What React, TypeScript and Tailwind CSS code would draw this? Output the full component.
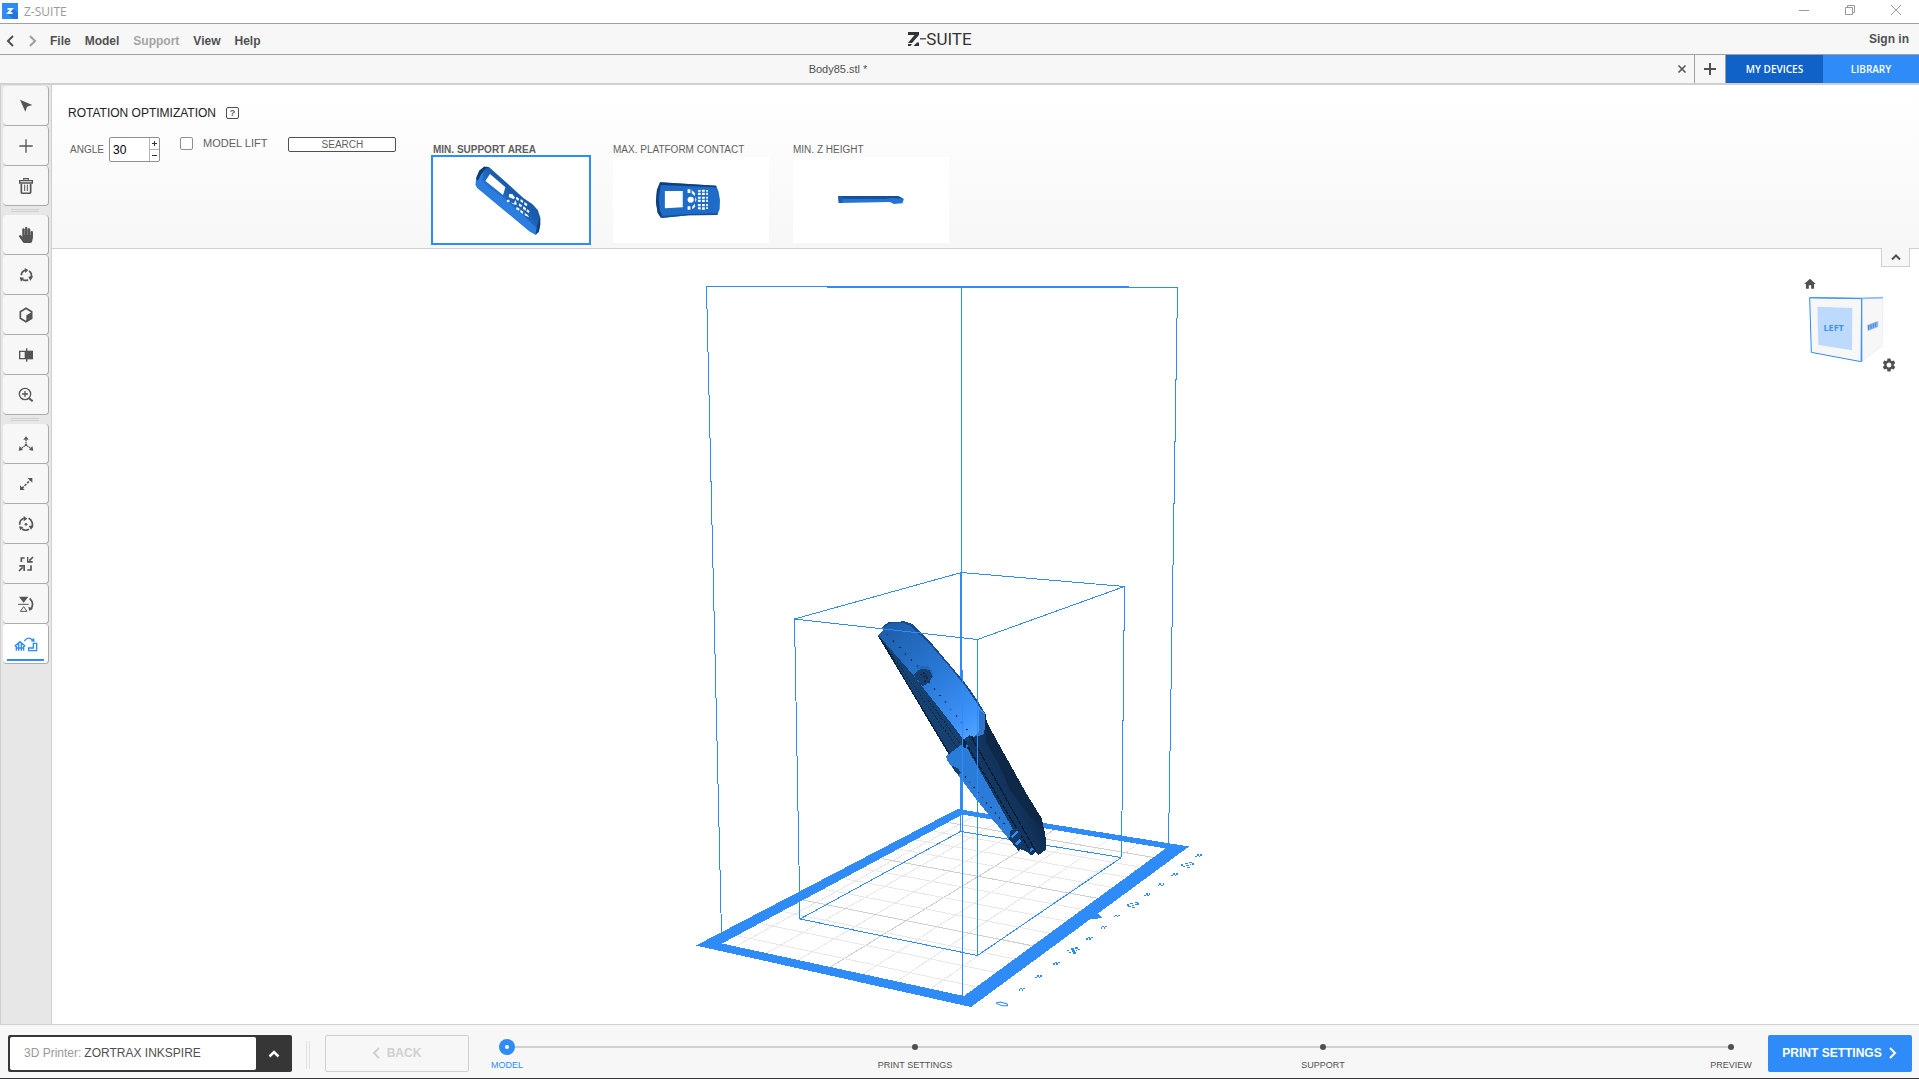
import React, { ReactNode, useState } from 'react';
import { FaHandPaper } from 'react-icons/fa';
import { MdHome, MdSettings } from 'react-icons/md';

type Point = [number, number];

// ---------- toolbar icons (drawn on a 48 unit grid) ----------

function Glyph({ children, wide }: { children: ReactNode; wide?: boolean }) {
  return (
    <svg
      viewBox={wide ? '0 0 72 48' : '0 0 48 48'}
      className={wide ? 'w-6 h-4' : 'w-4 h-4'}
      fill="none"
      stroke="currentColor"
      strokeWidth="4"
      aria-hidden="true"
    >
      {children}
    </svg>
  );
}

const icons: Record<string, ReactNode> = {
  select: (
    <Glyph>
      <path d="M6 5 L43 21 L27 26 L22 41 Z" fill="currentColor" stroke="none" />
    </Glyph>
  ),
  add: (
    <Glyph>
      <path d="M24 4 V44 M4 24 H44" />
    </Glyph>
  ),
  remove: (
    <Glyph>
      <path d="M17 5 V2 H31 V5 M5 8 H43 V15 H5 Z" />
      <path d="M10 17 V42 Q10 46 14 46 H34 Q38 46 38 42 V17" strokeWidth="5" />
      <path d="M20 20 V39 M28 20 V39" strokeWidth="3" />
    </Glyph>
  ),
  pan: <FaHandPaper className="w-4 h-4" />,
  orbit: (
    <Glyph>
      <path d="M10 25 A15 15 0 0 1 18 11 L24 10 M33 12 A16 16 0 0 1 39 31 M30 38 A16 16 0 0 1 13 37" strokeWidth="5" />
      <path d="M20 3 L31 9 L22 18 Z M46 28 L37 41 L31 29 Z M5 31 L18 32 L9 44 Z" fill="currentColor" stroke="none" />
    </Glyph>
  ),
  perspective: (
    <Glyph>
      <path d="M24 4 L41 14 V34 L24 44 L7 34 V14 Z" strokeWidth="5" />
      <path d="M42 15 L25 25 V45 L42 35 Z" fill="currentColor" stroke="none" />
    </Glyph>
  ),
  mirror: (
    <Glyph>
      <path d="M5 13 H22 V35 H5 Z M26 4 V44" />
      <path d="M26 11 H45 V37 H26 Z" fill="currentColor" stroke="none" />
    </Glyph>
  ),
  zoom: (
    <Glyph>
      <circle cx="21" cy="21" r="17" />
      <path d="M21 12 V30 M12 21 H30" />
      <path d="M33 34 L44 43" strokeWidth="6" />
    </Glyph>
  ),
  move: (
    <Glyph>
      <path d="M24 12 V23 M20 30 L10 37 M28 30 L38 37" strokeDasharray="4 2" />
      <circle cx="24" cy="27" r="4" fill="currentColor" stroke="none" />
      <path d="M24 1 L32 11 H16 Z M2 44 L5 30 L15 42 Z M46 44 L43 30 L33 42 Z" fill="currentColor" stroke="none" />
    </Glyph>
  ),
  scale: (
    <Glyph>
      <path d="M12 37 L37 12" strokeWidth="5" strokeDasharray="7 4" />
      <path d="M29 6 H43 V20 Z M6 28 V42 H20 Z" fill="currentColor" stroke="none" />
    </Glyph>
  ),
  rotate: (
    <Glyph>
      <path d="M5 26 A20 20 0 0 1 17 7 M32 7 A20 20 0 0 1 41 34 M33 40 A20 20 0 0 1 12 39" strokeWidth="5" />
      <path d="M17 0 L28 8 L17 16 Z M47 29 L39 41 L32 29 Z M3 31 L16 33 L7 43 Z" fill="currentColor" stroke="none" />
      <circle cx="24" cy="25" r="4" fill="currentColor" stroke="none" />
    </Glyph>
  ),
  fit: (
    <Glyph>
      <path d="M10 18 V6 H20 M28 42 H39 V28" strokeWidth="5" />
      <path d="M45 3 L34 14 M3 45 L14 34" strokeWidth="5" />
      <path d="M27 3 H31 V15 H44 V20 H27 Z M21 45 H16 V32 H4 V27 H21 Z" fill="currentColor" stroke="none" />
    </Glyph>
  ),
  flip: (
    <Glyph>
      <path d="M3 2 H31 L17 20 Z" fill="currentColor" stroke="none" />
      <path d="M0 25 H32" strokeWidth="3" />
      <path d="M17 32 L27 46 H7 Z" strokeWidth="3" />
      <path d="M35 7 Q50 22 39 38" strokeWidth="5" />
      <path d="M31 32 L45 38 L34 45 Z" fill="currentColor" stroke="none" />
    </Glyph>
  ),
  optimize: (
    <Glyph wide>
      <path d="M2 31 L18 17 L34 31 M7 30 V44 M14 22 V44 M22 22 V44 M29 30 V44 M5 36 H31" strokeWidth="4" />
      <path d="M31 15 Q42 -1 56 12" />
      <path d="M62 18 L50 16 L60 5 Z" fill="currentColor" stroke="none" />
      <path d="M58 22 H68 V44 H44 V36 H58 Z" />
    </Glyph>
  ),
};

const toolGroups = [
  [['select', 'Select'], ['add', 'Add model'], ['remove', 'Delete']],
  [['pan', 'Pan'], ['orbit', 'Orbit'], ['perspective', 'Perspective'], ['mirror', 'Section'], ['zoom', 'Zoom']],
  [['move', 'Move'], ['scale', 'Scale'], ['rotate', 'Rotate'], ['fit', 'Fit'], ['flip', 'Flip'], ['optimize', 'Rotation optimization']],
];

function Chevron({ dir, className }: { dir: 'left' | 'right'; className?: string }) {
  const d = { left: 'M8 1 L3 6 L8 11', right: 'M4 1 L9 6 L4 11' }[dir];
  return (
    <svg viewBox="0 0 12 12" className={'w-3 h-3 ' + (className || '')} fill="none" stroke="currentColor" strokeWidth="2" aria-hidden="true">
      <path d={d} />
    </svg>
  );
}

// ---------- chrome ----------

function TitleBar() {
  return (
    <div className="h-6 flex items-center bg-white border-b border-[#a0a0a0] text-[#999999]">
      <svg viewBox="0 0 16 16" className="w-4 h-4 ml-0.5 mb-0.5" aria-hidden="true">
        <rect width="16" height="16" fill="#2e8bf7" />
        <path d="M11 5 L16 10 V16 H11 L6 11 Z" fill="#2374dc" />
        <path d="M5.5 5.8 H10 L6 10.2 H10.5" fill="none" stroke="#fff" strokeWidth="1.7" />
      </svg>
      <span className="ml-1.5 text-[12px] leading-4 font-['Open_Sans',sans-serif]">Z-SUITE</span>
      <div className="ml-auto flex items-center gap-9 mr-[18px] pb-1">
        <button aria-label="Minimize">
          <svg viewBox="0 0 10 10" className="w-2.5 h-2.5" stroke="currentColor"><path d="M0 5.5 H10" /></svg>
        </button>
        <button aria-label="Restore">
          <svg viewBox="0 0 10 10" className="w-2.5 h-2.5" fill="none" stroke="currentColor">
            <path d="M.5 2.5 H7.5 V9.5 H.5 Z M2.5 2 V.5 H9.5 V7.5 H8" />
          </svg>
        </button>
        <button aria-label="Close">
          <svg viewBox="0 0 10 10" className="w-2.5 h-2.5" stroke="currentColor"><path d="M0 0 L10 10 M10 0 L0 10" /></svg>
        </button>
      </div>
    </div>
  );
}

function MenuBar() {
  return (
    <div className="h-[31px] flex items-center pl-[5px] pr-2.5 bg-[#f7f7f7] border-b border-[#a0a0a0] text-[12px] font-bold text-[#505050]">
      <nav className="flex-1 flex items-center pt-1">
        <button aria-label="Undo"><Chevron dir="left" /></button>
        <button aria-label="Redo" className="ml-[9px] mr-3 text-[#9f9f9f]"><Chevron dir="right" /></button>
        <div className="flex gap-3.5">
          <button>File</button>
          <button>Model</button>
          <button disabled className="text-[#a5a5a5]">Support</button>
          <button>View</button>
          <button>Help</button>
        </div>
      </nav>
      <div className="flex items-center pl-1.5 text-[#333333]">
        <svg viewBox="0 0 18 14" className="w-[18px] h-3.5" fill="#333333" aria-hidden="true">
          <path d="M0 0 H11 V3 L4 11 H0 L6.5 3 H0 Z M5.500 14 L9 10.500 H11 V14 Z M0 12 H4 L2.500 14 H0 Z" />
          <path d="M12 6.200 H18 V7.400 H12 Z" />
        </svg>
        <span className="text-[17px] leading-5 font-normal font-['Roboto',sans-serif]">SUITE</span>
      </div>
      <div className="flex-1" />
      <a href="#signin">Sign in</a>
    </div>
  );
}

function TabBar() {
  return (
    <div className="h-[30px] flex items-stretch bg-[#f7f7f7] border-b-2 border-[#d0d0d0] text-[#505050]">
      <div className="flex-1 flex items-center pr-1.5 border-r border-[#a0a0a0]">
        <span className="flex-1 text-center text-[11px]">Body85.stl *</span>
        <button aria-label="Close tab" className="w-3 h-3 flex items-center justify-center">
          <svg viewBox="0 0 8 8" className="w-2 h-2" stroke="currentColor" strokeWidth="1.5"><path d="M.5 .5 L7.500 7.500 M7.500 .5 L.5 7.500" /></svg>
        </button>
      </div>
      <button aria-label="New tab" className="w-[31px] flex items-center justify-center border-r border-[#a0a0a0]">
        <svg viewBox="0 0 12 12" className="w-3 h-3" stroke="currentColor" strokeWidth="2"><path d="M6 0 V12 M0 6 H12" /></svg>
      </button>
      <button className="w-[97px] bg-[#1062c8] text-white text-[10px] font-semibold font-['Open_Sans',sans-serif]">MY DEVICES</button>
      <button className="w-24 bg-[#2e8bf7] text-white text-[10px] font-semibold font-['Open_Sans',sans-serif]">LIBRARY</button>
    </div>
  );
}

function Sidebar() {
  return (
    <aside className="w-[52px] shrink-0 bg-[#e7e7e7] border-x border-[#d0d0d0] pt-px pl-0.5">
      {toolGroups.map((group, i) => (
        <div key={i}>
          {i > 0 && (
            <div className="h-[9px] flex justify-center items-center">
              <div className="w-7 h-[3px] mr-1 border-y border-[#d0d0d0]" />
            </div>
          )}
          {group.map(([id, label]) => (
            <button
              key={id}
              aria-label={label}
              className={
                id === 'optimize'
                  ? 'w-[46px] h-10 px-1 pt-1 flex flex-col items-center justify-between bg-white text-[#2e8bf7] rounded border-r border-b border-[#ababab]'
                  : 'w-[46px] h-10 flex items-center justify-center bg-[#f7f7f7] text-[#555555] rounded border-r border-b border-[#ababab]'
              }
            >
              {id === 'optimize' ? <span className="flex-1 flex items-center">{icons[id]}</span> : icons[id]}
              {id === 'optimize' && <span className="w-full h-0.5 mb-0.5 bg-[#2e8bf7]" />}
            </button>
          ))}
        </div>
      ))}
    </aside>
  );
}

// ---------- orientation thumbnails ----------

function SupportThumb() {
  return (
    <svg viewBox="433 157 156 86" className="w-full h-full" aria-hidden="true">
      <defs>
        <linearGradient id="thumbBody" x1="0" y1="1" x2="1" y2="0">
          <stop offset="0.3" stopColor="#2f86ee" />
          <stop offset="0.6" stopColor="#1a5cab" />
        </linearGradient>
      </defs>
      <g transform="translate(420 130) scale(0.3444 0.3333)">
        <path d="M161 165 L163 145 L172 122 L186 110 L200 111 L262 168 L300 204 L326 222 L342 240 L349 262 L349 285 L345 305 L336 314 L318 304 L166 174 Z" fill="url(#thumbBody)" />
        <path d="M163 165 L165 145 L175 122 L190 112 L184 130 L180 152 L200 173 L240 200 L345 300 L336 314 L318 304 Z" fill="#2b7de0" />
        <path d="M163 145 L172 122 L186 110 L200 111 L190 116 L176 135 L168 152 Z" fill="#103a6e" />
        <path d="M190 153 L203 132 L248 172 L241 195 Z" fill="#fff" />
        <path d="M349 262 L349 285 L345 305 L336 314 L340 285 Z" fill="#11417c" />
        <g fill="#fff">
          <path d="M259 192 L268 192 L276 203 L271 207 L258 201 Z" />
          <circle cx="256" cy="213" r="4" />
          <path d="M264 217 L272 221 L278 210 L281 224 L270 223 Z" />
          <path d="M281 200 L288 206 L285 213 L278 206 Z M293 207 L300 213 L298 219 L291 214 Z M304 216 L312 223 L309 229 L302 223 Z" />
          <path d="M288 220 L296 226 L294 232 L287 227 Z M300 229 L308 235 L306 242 L299 236 Z M311 238 L318 243 L316 249 L309 244 Z" />
          <path d="M281 231 L289 236 L288 242 L279 238 Z M292 239 L300 245 L298 252 L291 246 Z M304 249 L312 254 L317 262 L304 256 Z" />
        </g>
      </g>
    </svg>
  );
}

function PlatformThumb() {
  return (
    <svg viewBox="613 157 156 86" className="w-full h-full" aria-hidden="true">
      <g transform="translate(420 130) scale(0.3444 0.3333)">
        <path d="M697 157 L780 162 L860 167 L867 185 L871 210 L870 238 L863 255 L780 256 L700 264 L690 248 L685 215 L688 180 Z" fill="#1f6bc8" />
        <path d="M697 157 L688 180 L685 215 L690 248 L700 264 L703 258 L696 240 L693 205 L699 165 L860 172 L860 167 Z" fill="#123f7a" />
        <path d="M700 264 L780 256 L863 255 L865 250 L780 252 L702 258 Z" fill="#174f96" />
        <path d="M711 183 H763 V232 L711 235 Z" fill="#fff" />
        <g fill="#fff">
          <circle cx="786" cy="209" r="9" />
          <path d="M777 178 H785 V189 H777 Z M789 180 L799 190 L798 198 L789 190 Z M777 229 H785 V239 H777 Z M790 231 L798 221 L799 230 L791 238 Z M799 201 L803 209 L799 217 Z" />
          <path d="M807 181 L815 179 V195 H807 Z M807 200 H815 V216 H807 Z M807 222 H815 V239 L807 237 Z" />
          <path d="M819 179 H827 V195 H819 Z M819 200 H827 V216 H819 Z M819 222 H827 V239 H819 Z" />
          <path d="M831 180 H836 V195 H831 Z M831 200 H836 V216 H831 Z M831 222 H836 V237 H831 Z" />
        </g>
        <path d="M805 187 H838 M805 208 H838 M805 230 H838" stroke="#1f6bc8" strokeWidth="3" />
      </g>
    </svg>
  );
}

function HeightThumb() {
  return (
    <svg viewBox="793 157 156 86" className="w-full h-full" aria-hidden="true">
      <g transform="translate(420 130) scale(0.3444 0.3333)">
        <path d="M1214 198 L1388 198 L1405 207 L1401 220 L1376 222 L1365 216 L1216 219 Z" fill="#2374d6" />
        <path d="M1216 198 L1388 198 L1404 206 L1370 204 L1350 207 L1228 206 Z" fill="#185097" />
        <path d="M1214 198 L1226 199 L1226 219 L1216 219 Z" fill="#1b5eb0" />
      </g>
    </svg>
  );
}

const orientations = [
  { id: 'support', label: 'MIN. SUPPORT AREA', thumb: <SupportThumb /> },
  { id: 'platform', label: 'MAX. PLATFORM CONTACT', thumb: <PlatformThumb /> },
  { id: 'height', label: 'MIN. Z HEIGHT', thumb: <HeightThumb /> },
];

function RotationPanel() {
  const [angle, setAngle] = useState(30);
  const [lift, setLift] = useState(false);
  const [selected, setSelected] = useState('support');

  return (
    <section className="relative z-10 h-[164px] flex items-start bg-gradient-to-b from-white to-[#f7f7f7] border-b border-[#d0d0d0] text-[#5f5f5f]">
      <div className="w-[379px] shrink-0 pl-4 pt-5">
        <div className="flex items-center gap-2.5">
          <h1 className="text-[12px] leading-4 text-[#222222]">ROTATION OPTIMIZATION</h1>
          <button aria-label="Help" className="w-[13px] h-3 flex items-center justify-center rounded-xs border border-[#505050] text-[9px] leading-none font-bold">?</button>
        </div>
        <div className="mt-4 flex items-start">
          <label htmlFor="angle" className="w-10 pt-px pl-0.5 text-[10px] leading-6">ANGLE</label>
          <div className="flex w-[51px] h-[25px] ml-px border border-[#909090] rounded-xs bg-white">
            <input
              id="angle"
              type="text"
              value={angle}
              onChange={(e) => setAngle(Number(e.target.value) || 0)}
              className="w-10 min-w-0 pl-[3px] pt-px text-[12px] text-black outline-none"
            />
            <div className="w-[10px] shrink-0 flex flex-col border-l border-[#b5b5b5] text-[#333333]">
              <button aria-label="Increase" onClick={() => setAngle(angle + 1)} className="flex-1 flex items-center justify-center border-b border-[#b5b5b5]">
                <svg viewBox="0 0 5 5" className="w-[5px] h-[5px]" stroke="currentColor"><path d="M2.500 0 V5 M0 2.500 H5" /></svg>
              </button>
              <button aria-label="Decrease" onClick={() => setAngle(angle - 1)} className="flex-1 flex items-center justify-center">
                <svg viewBox="0 0 5 5" className="w-[5px] h-[5px]" stroke="currentColor"><path d="M0 2.500 H5" /></svg>
              </button>
            </div>
          </div>
          <label className="ml-5 flex items-center gap-2.5 text-[11px] leading-[13px]">
            <input
              type="checkbox"
              checked={lift}
              onChange={(e) => setLift(e.target.checked)}
              className="appearance-none w-[13px] h-[13px] bg-white border border-[#909090] rounded-xs checked:bg-[#2e8bf7]"
            />
            MODEL LIFT
          </label>
          <button className="ml-[21px] w-[108px] h-[15px] border border-[#505050] rounded-xs bg-white text-[10px] leading-none">SEARCH</button>
        </div>
      </div>
      <div className="flex gap-5 pt-[59px]">
        {orientations.map((o) => (
          <button key={o.id} onClick={() => setSelected(o.id)} className="w-40 text-left">
            <span className={selected === o.id ? 'block pl-0.5 text-[10px] leading-[11px] font-bold' : 'block pl-0.5 text-[10px] leading-[11px]'}>{o.label}</span>
            <span className={selected === o.id ? 'block h-[90px] border-2 border-[#2e8bf7] bg-white' : 'block h-[90px] border-2 border-transparent bg-white bg-clip-padding'}>
              {o.thumb}
            </span>
          </button>
        ))}
      </div>
      <button aria-label="Collapse panel" className="absolute right-[9px] top-[163px] w-[29px] h-[19px] flex items-center justify-center bg-[#f7f7f7] border border-t-0 border-[#d0d0d0] text-[#505050]">
        <svg viewBox="0 0 10 6" className="w-2.5 h-1.5" fill="none" stroke="currentColor" strokeWidth="2"><path d="M1 5.500 L5 1.500 L9 5.500" /></svg>
      </button>
    </section>
  );
}

// ---------- 3D scene ----------

// inner corners of the build platform on screen: left, front, right, back
const platform: Point[] = [[722, 943.5], [964, 996], [1165.5, 848.5], [962.5, 814.5]];

// maps the unit square onto the platform with perspective
function project(u: number, v: number): Point {
  const [[x0, y0], [x1, y1], [x2, y2], [x3, y3]] = platform;
  const dx1 = x1 - x2, dx2 = x3 - x2, dx3 = x0 - x1 + x2 - x3;
  const dy1 = y1 - y2, dy2 = y3 - y2, dy3 = y0 - y1 + y2 - y3;
  const det = dx1 * dy2 - dx2 * dy1;
  const g = (dx3 * dy2 - dx2 * dy3) / det;
  const h = (dx1 * dy3 - dx3 * dy1) / det;
  const w = g * u + h * v + 1;
  return [
    ((x1 - x0 + g * x1) * u + (x3 - x0 + h * x3) * v + x0) / w,
    ((y1 - y0 + g * y1) * u + (y3 - y0 + h * y3) * v + y0) / w,
  ];
}

function gridLine(a: Point, b: Point) {
  return `M${project(...a).join(' ')} L${project(...b).join(' ')}`;
}

const BED_X = 74;
const BED_Y = 132;
const across = [4.4, 14.4, 24.4, 34.4, 44.4, 54.4, 64.4];
const along = [6.5, 17, 27.5, 38, 48.5, 59, 69.5, 80, 90.5, 101, 111.5, 122];

// every fourth line is a major one
function Grid() {
  return (
    <g fill="none" strokeWidth="1">
      {across.map((x, i) => (
        <path key={'x' + x} d={gridLine([x / BED_X, 0], [x / BED_X, 1])} stroke={i % 4 === 3 ? '#cfcfcf' : '#e8e8e8'} />
      ))}
      {along.map((y, i) => (
        <path key={'y' + y} d={gridLine([0, y / BED_Y], [1, y / BED_Y])} stroke={i % 4 === 3 ? '#cfcfcf' : '#e8e8e8'} />
      ))}
    </g>
  );
}

function Ruler() {
  const small: Point[] = [[992, 628], [1040, 590], [1092, 550], [1188, 475], [1230, 442], [1268, 408], [1356, 344], [1396, 314], [1436, 284], [1505, 227]];
  const large: Point[] = [[1143, 512], [1316, 375], [1474, 255]];
  return (
    <g transform="translate(680 780) scale(0.3444 0.3333)" fill="none" stroke="#2e8bf7" strokeWidth="3">
      <path d="M919 668 L930 666 L950 672 L951 677 L936 677 L920 671 Z" />
      {small.map(([x, y]) => (
        <path key={x} strokeWidth="4" d={`M${x - 9} ${y + 2} h5 M${x - 4} ${y - 2} h6 M${x + 1} ${y + 2} h4 M${x + 5} ${y - 2} h5`} />
      ))}
      {large.map(([x, y]) => (
        <path key={x} strokeWidth="4" d={`M${x - 18} ${y} h5 M${x - 14} ${y + 5} h7 M${x - 8} ${y - 5} h8 M${x - 4} ${y + 1} h7 M${x - 3} ${y + 7} h9 M${x + 4} ${y - 8} h9 M${x + 6} ${y - 1} h4 M${x + 12} ${y - 3} h6`} />
      ))}
    </g>
  );
}

function PhoneModel() {
  return (
    <g transform="translate(850 600) scale(0.3333)">
      <defs>
        <linearGradient id="shell" gradientUnits="userSpaceOnUse" x1="120" y1="60" x2="400" y2="400">
          <stop offset="0" stopColor="#1d5da8" />
          <stop offset="0.5" stopColor="#2a7ad9" />
          <stop offset="0.85" stopColor="#3d93fb" />
          <stop offset="1" stopColor="#55a7ff" />
        </linearGradient>
        <linearGradient id="back" gradientUnits="userSpaceOnUse" x1="430" y1="600" x2="520" y2="555">
          <stop offset="0" stopColor="#143a68" />
          <stop offset="0.6" stopColor="#12325a" />
          <stop offset="1" stopColor="#0d2848" />
        </linearGradient>
      </defs>
      {/* inner side */}
      <path d="M85 106 L195 222 L225 262 L345 390 L400 400 L365 445 L298 463 Z" fill="#15406f" />
      <path d="M95 122 L320 440 M235 300 L330 430" stroke="#0a2140" strokeWidth="3" strokeDasharray="7 4" />
      <path d="M86 108 L298 462" stroke="#0a2140" strokeWidth="4" />
      {/* lower side */}
      <path d="M289 468 L340 430 L362 440 L510 700 L480 722 L380 600 L290 480 Z" fill="#2b7bd8" />
      {/* back cover */}
      <path d="M405 335 L412 372 L445 430 L480 492 L530 582 L575 655 L584 695 L587 715 L587 750 L566 765 L556 757 L546 767 L530 755 L512 748 L505 752 L478 718 L490 690 L352 445 L360 400 L400 390 Z" fill="url(#back)" />
      <path d="M410 365 L445 430 L480 492 L530 582 L575 655 L584 695 L540 650 L480 570 L450 500 L408 425 Z" fill="#0d2848" />
      <path d="M353 440 L540 752 M365 412 L440 545 L558 755" fill="none" stroke="#071a31" strokeWidth="4" strokeDasharray="14 3" />
      {/* top shell */}
      <path d="M85 106 L98 93 L97 82 L115 66 L165 64 L185 71 L245 130 L300 195 L350 255 L385 305 L405 340 L405 385 L400 405 L372 410 L358 406 L340 418 L300 365 L218 262 L190 225 Z" fill="url(#shell)" />
      <path d="M97 82 L115 66 L165 64 L185 71 L245 130 L300 195 L350 255 L385 305 L405 340 L395 332 L347 260 L293 193 L238 131 L180 77 L160 68 L120 70 Z" fill="#164c8c" />
      <path d="M388 330 L405 342 L405 385 L400 405 L372 410 L386 395 Z" fill="#2567b8" opacity="0.75" />
      {/* notch */}
      <path d="M190 225 L202 212 L222 204 L242 213 L248 229 L238 246 L218 260 Z" fill="#15406f" />
      <path d="M199 208 L212 199 L232 199 L246 210 L249 229 L240 212 L222 206 Z" fill="#2167bb" />
      <path d="M210 225 L222 219 L232 232 L224 246 M218 229 h10" fill="none" stroke="#091d38" strokeWidth="4" strokeDasharray="6 4" />
      <path d="M112 103 L205 202 M236 245 L358 396" stroke="#081d38" strokeWidth="4" strokeDasharray="4 22" />
      <path d="M345 530 L470 680" stroke="#081d38" strokeWidth="4" strokeDasharray="4 16" />
      <path d="M306 497 L322 504 L334 518 L326 526 L314 514 Z" fill="#15406f" />
      {/* connector pins */}
      <path d="M482 692 L500 684 L514 704 L506 716 L514 733 L500 746 L478 715 Z" fill="#143a68" />
      <path d="M486 712 L502 694 M498 734 L512 720 M540 752 L550 746" stroke="#2e8bf7" strokeWidth="7" />
      <path d="M340 418 L352 425 L346 445 L335 440 Z" fill="#0c2747" />
    </g>
  );
}

function ViewCube() {
  return (
    <div className="absolute right-7 top-7 w-[90px] h-[100px] text-[#505050]">
      <button aria-label="Home view" className="absolute left-0.5 top-0"><MdHome className="w-3.5 h-3.5" /></button>
      <svg viewBox="485 831 270 300" className="w-full h-full" role="img" aria-label="View cube">
        <path d="M511 893 L667 896 L665 1085 L516 1057 Z" fill="#f7f7f7" stroke="#2e8bf7" strokeWidth="3" />
        <path d="M667 896 L731 893 L728 1038 L665 1085 Z" fill="#f7f7f7" stroke="#d9e9fc" strokeWidth="2" />
        <path d="M511 893 L667 895 V1085" fill="none" stroke="#4697f5" strokeWidth="4" />
        <path d="M667 895 L731 893" stroke="#8dbef8" strokeWidth="5" />
        <path d="M534 920 L639 924 L638 1051 L537 1035 Z" fill="#bddafc" />
        <text x="583" y="992" textAnchor="middle" fontSize="27" fontWeight="700" fill="#3f93f2" fontFamily="Open Sans, sans-serif">LEFT</text>
        <path d="M684 975 L717 963 L716 981 L685 993 Z" fill="#8ab8f0" />
        <path d="M688 976 v13 M695 973 v13 M702 970 v13 M709 967 v13" stroke="#3f80cf" strokeWidth="3" />
      </svg>
      <button aria-label="View settings" className="absolute -right-1.5 bottom-1"><MdSettings className="w-4 h-4" /></button>
    </div>
  );
}

function Viewport() {
  return (
    <main className="relative flex-1 min-h-0 bg-white">
      <svg viewBox="52 249 1867 775" className="absolute inset-0 w-full h-full" shapeRendering="crispEdges" role="img" aria-label="Build platform with model">
        <Grid />
        <g fill="none" stroke="#2e8bf7" strokeWidth="1">
          {/* build volume */}
          <path d="M721.500 934 L706.500 286.500 H828 M1129 287.500 H1177.500 L1168.500 845" />
          <path d="M827 287 H1129" strokeWidth="2" />
          <path d="M961.500 287 V812" />
          <path d="M961.500 572 L962.500 997" />
          {/* hidden part of the model bounds */}
          <path d="M960.500 572 V831.500 M800 919 L960.500 831.500 L1121.500 857.500" />
        </g>
        <path
          d="M696 945.500 L957.500 809 L1189 846.500 L971 1007 Z M722 943.500 L964 996 L1165.500 848.500 L962.500 814.500 Z"
          fill="#2e8bf7"
          fillRule="evenodd"
        />
        <path d="M1086 920 L1102 918 L1098 913 L1101 907 Z" fill="#2e8bf7" />
        <Ruler />
        <PhoneModel />
        <g fill="none" stroke="#2e8bf7" strokeWidth="1">
          <path d="M794.500 619 L961.500 572.500 L1124.500 586.500 L977.500 639.500 Z" />
          <path d="M794.500 619 L800 919 L977.500 955.500 L1121.500 857.500 L1124.500 586.500 M977.500 639.500 V955.500" />
          <path d="M962.500 670 V997" />
        </g>
      </svg>
      <ViewCube />
    </main>
  );
}

// ---------- footer ----------

function Footer() {
  const steps = ['MODEL', 'PRINT SETTINGS', 'SUPPORT', 'PREVIEW'];
  return (
    <footer className="h-[55px] flex items-start pt-2.5 px-2 bg-[#f7f7f7] border-t border-t-[#d0d0d0] border-b border-b-[#35353b]">
      <button className="w-[284px] h-[37px] shrink-0 flex items-stretch p-0.5 pr-0 bg-[#363636] rounded-xs text-[12px]">
        <span className="flex-1 flex items-center pl-3.5 pb-0.5 bg-white rounded-xs text-[#505050]">
          <span className="text-[#999999] mr-[3px]">3D Printer:</span>ZORTRAX INKSPIRE
        </span>
        <span className="w-9 flex items-center justify-center text-white">
          <svg viewBox="0 0 12 8" className="w-3 h-2" fill="none" stroke="currentColor" strokeWidth="2.500"><path d="M1.500 6.500 L6 2 L10.500 6.500" /></svg>
        </span>
      </button>
      <div className="w-1 h-7 shrink-0 mt-1.5 ml-3.5 mr-[15px] border-x border-[#e0e0e0]" />
      <button disabled className="w-36 h-[37px] shrink-0 flex items-center justify-center gap-1 pb-0.5 pr-0.5 border border-[#d0d0d0] rounded-xs text-[12px] font-bold text-[#d0d0d0]">
        <Chevron dir="left" />BACK
      </button>
      <ol className="relative flex-1 flex justify-between pt-1 pl-0.5 pr-px text-[9px] text-[#505050]">
        <li aria-hidden="true" className="absolute left-9 right-9 top-[11px] h-0.5 bg-[#d0d0d0]" />
        {steps.map((step, i) => (
          <li key={step} className={i === 0 ? 'relative w-[72px] flex flex-col items-center text-[#2e8bf7]' : 'relative w-[72px] flex flex-col items-center'}>
            <span className="h-4 flex items-center">
              {i === 0
                ? <span className="w-4 h-4 rounded-full bg-[#2e8bf7] flex items-center justify-center"><span className="w-1 h-1 rounded-full bg-white" /></span>
                : <span className="w-1.5 h-1.5 rounded-full bg-[#505050]" />}
            </span>
            <span className="mt-1 leading-3 whitespace-nowrap">{step}</span>
          </li>
        ))}
      </ol>
      <button className="w-36 h-[37px] shrink-0 mr-[-1px] flex items-center justify-center gap-1 pb-0.5 bg-[#2e8bf7] rounded-xs text-[12px] font-bold text-white">
        PRINT SETTINGS<Chevron dir="right" />
      </button>
    </footer>
  );
}

export default function App() {
  return (
    <div className="h-screen flex flex-col bg-white font-['Liberation_Sans',sans-serif]">
      <TitleBar />
      <MenuBar />
      <TabBar />
      <div className="flex-1 min-h-0 flex">
        <Sidebar />
        <div className="flex-1 min-w-0 flex flex-col">
          <RotationPanel />
          <Viewport />
        </div>
      </div>
      <Footer />
    </div>
  );
}
